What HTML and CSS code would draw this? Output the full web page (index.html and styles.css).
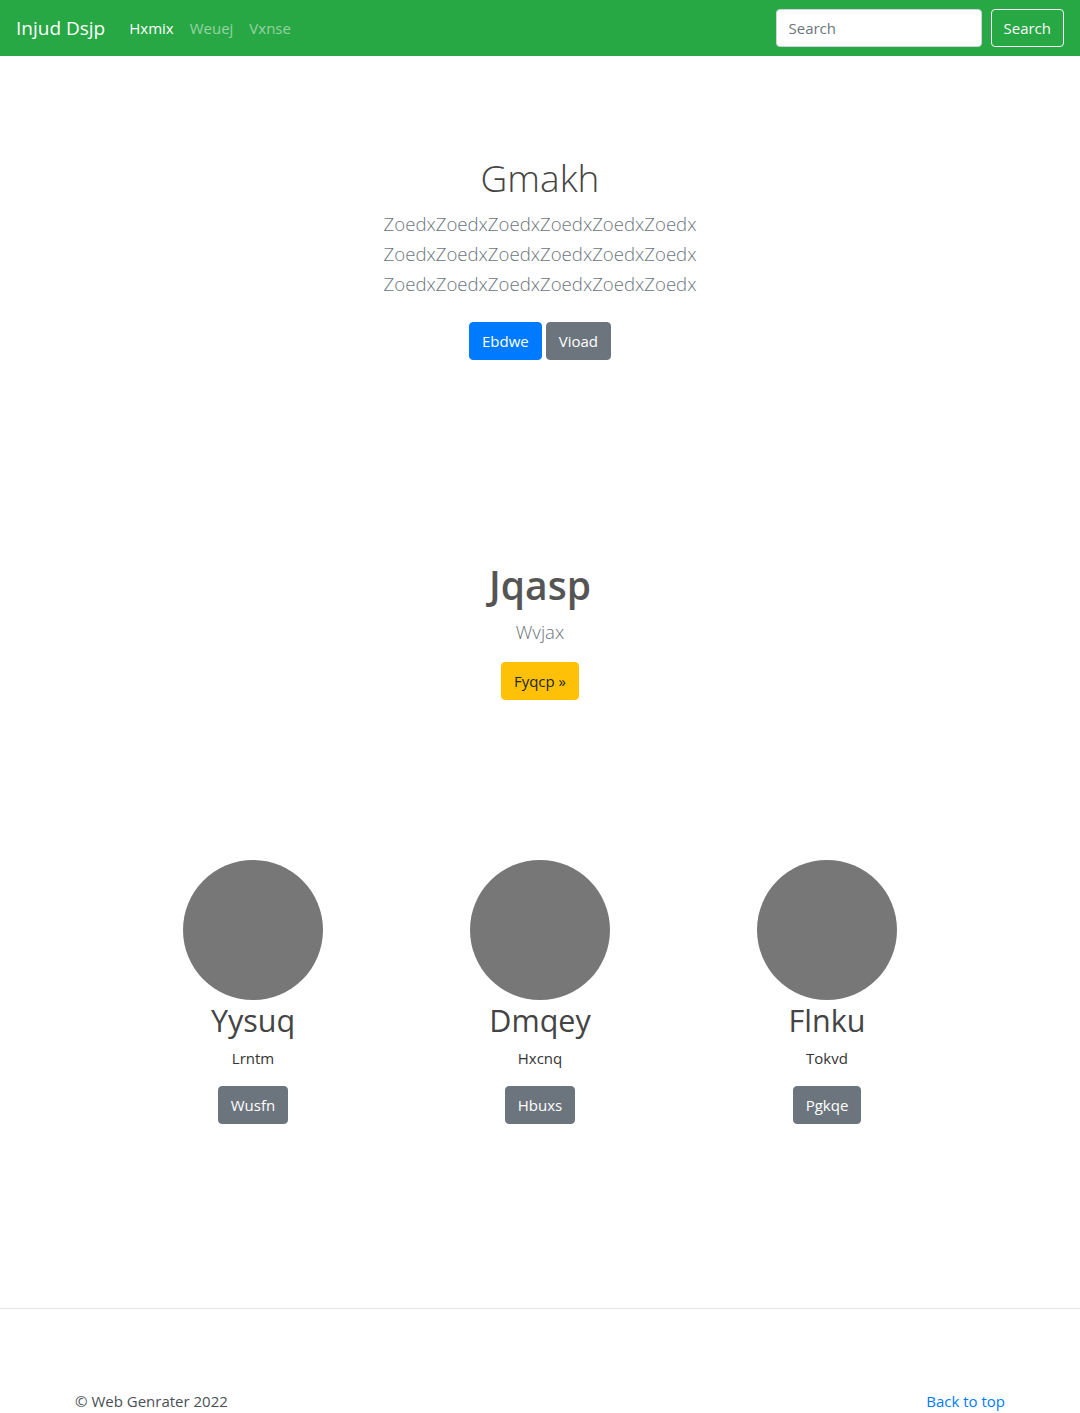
FILE: index.html
```html
<!DOCTYPE html>
<html lang="en">
<head>
<meta charset="utf-8">
<title>Injud Dsjp</title>
<link rel="stylesheet" href="styles.css">
</head>
<body>
<nav class="navbar">
  <a class="brand" href="#">Injud Dsjp</a>
  <ul class="nav">
    <li><a class="nav-link active" href="#">Hxmix</a></li>
    <li><a class="nav-link" href="#">Weuej</a></li>
    <li><a class="nav-link" href="#">Vxnse</a></li>
  </ul>
  <form class="search">
    <input class="search-input" type="text" placeholder="Search">
    <button class="btn btn-outline-light" type="button">Search</button>
  </form>
</nav>

<section class="hero">
  <h1 class="hero-title">Gmakh</h1>
  <p class="lead muted hero-lead">ZoedxZoedxZoedxZoedxZoedxZoedx ZoedxZoedxZoedxZoedxZoedxZoedx ZoedxZoedxZoedxZoedxZoedxZoedx</p>
  <div class="btn-row">
    <a class="btn btn-primary" href="#">Ebdwe</a>
    <a class="btn btn-secondary" href="#">Vioad</a>
  </div>
</section>

<section class="feature">
  <h1 class="feature-title">Jqasp</h1>
  <p class="lead muted feature-lead">Wvjax</p>
  <a class="btn btn-warning" href="#">Fyqcp &raquo;</a>
</section>

<section class="cols">
  <div class="col">
    <div class="circle"></div>
    <h2 class="col-title">Yysuq</h2>
    <p class="col-text">Lrntm</p>
    <a class="btn btn-secondary" href="#">Wusfn</a>
  </div>
  <div class="col">
    <div class="circle"></div>
    <h2 class="col-title">Dmqey</h2>
    <p class="col-text">Hxcnq</p>
    <a class="btn btn-secondary" href="#">Hbuxs</a>
  </div>
  <div class="col">
    <div class="circle"></div>
    <h2 class="col-title">Flnku</h2>
    <p class="col-text">Tokvd</p>
    <a class="btn btn-secondary" href="#">Pgkqe</a>
  </div>
</section>

<footer class="footer">
  <div class="footer-inner">
    <p class="copy">&copy; Web Genrater 2022</p>
    <a class="to-top" href="#">Back to top</a>
  </div>
</footer>
</body>
</html>
```

FILE: styles.css
```css
* { box-sizing: border-box; }

body {
  margin: 0;
  font-family: "Open Sans", "Noto Sans", sans-serif;
  font-size: 16px;
  line-height: 1.5;
  color: #333;
  background: #fff;
}

a { text-decoration: none; }

.navbar {
  display: flex;
  align-items: center;
  height: 56px;
  padding: 8px 16px;
  background: #28a745;
}

.brand {
  font-size: 19px;
  line-height: 30px;
  color: #fff;
  margin-right: 16px;
}

.nav {
  display: flex;
  list-style: none;
  margin: 0;
  padding: 0;
  flex: 1;
}

.nav-link {
  display: block;
  padding: 8px;
  font-size: 15px;
  color: rgba(255, 255, 255, 0.5);
}

.nav-link.active { color: #fff; }

.search {
  display: flex;
  align-items: center;
  gap: 9px;
}

.search-input {
  width: 206px;
  height: 38px;
  padding: 6px 12px;
  font-family: inherit;
  font-size: 15px;
  color: #495057;
  border: 1px solid #ced4da;
  border-radius: 4px;
  background: #fff;
}

.search-input::placeholder { color: #6c757d; }

.btn {
  display: inline-block;
  height: 38px;
  padding: 6px 12px;
  font-family: inherit;
  font-size: 15px;
  line-height: 24px;
  border: 1px solid transparent;
  border-radius: 4px;
  text-align: center;
  cursor: pointer;
}

.btn-outline-light {
  background: transparent;
  color: #f8f9fa;
  border-color: #f8f9fa;
}

.btn-primary { background: #007bff; border-color: #007bff; color: #fff; }
.btn-secondary { background: #6c757d; border-color: #6c757d; color: #fff; }
.btn-warning { background: #ffc107; border-color: #ffc107; color: #212529; }

.muted { color: #6c757d; }

.lead {
  font-size: 18.6px;
  font-weight: 300;
  line-height: 30px;
}

.hero {
  display: flex;
  flex-direction: column;
  align-items: center;
  padding-top: 98px;
  text-align: center;
}

.hero-title {
  margin: 0 0 7px;
  font-size: 37px;
  font-weight: 300;
  line-height: 48px;
  color: #444;
}

.hero-lead {
  width: 525px;
  margin: 0 0 23px;
}

.btn-row {
  display: flex;
  gap: 4px;
}

.feature {
  display: flex;
  flex-direction: column;
  align-items: center;
  padding-top: 201px;
  text-align: center;
}

.feature-title {
  margin: 0 0 8px;
  font-size: 39px;
  font-weight: 600;
  line-height: 48px;
  color: #555;
}

.feature-lead {
  margin: 0 0 15px;
}

.cols {
  display: grid;
  grid-template-columns: repeat(3, 287px);
  justify-content: center;
  padding-top: 160px;
}

.col {
  display: flex;
  flex-direction: column;
  align-items: center;
  text-align: center;
}

.circle {
  width: 140px;
  height: 140px;
  border-radius: 50%;
  background: #777;
}

.col-title {
  margin: 1px 0 7px;
  font-size: 30.5px;
  font-weight: 400;
  line-height: 38px;
  color: #444;
}

.col-text {
  margin: 0 0 16px;
  font-size: 15px;
  line-height: 24px;
}

.footer {
  margin-top: 184px;
  border-top: 1px solid #e5e5e5;
  padding-top: 81px;
}

.footer-inner {
  display: flex;
  justify-content: space-between;
  width: 930px;
  margin: 0 auto;
}

.copy {
  margin: 0;
  font-size: 15px;
  color: #495057;
}

.to-top {
  font-size: 15px;
  color: #007bff;
}
```
